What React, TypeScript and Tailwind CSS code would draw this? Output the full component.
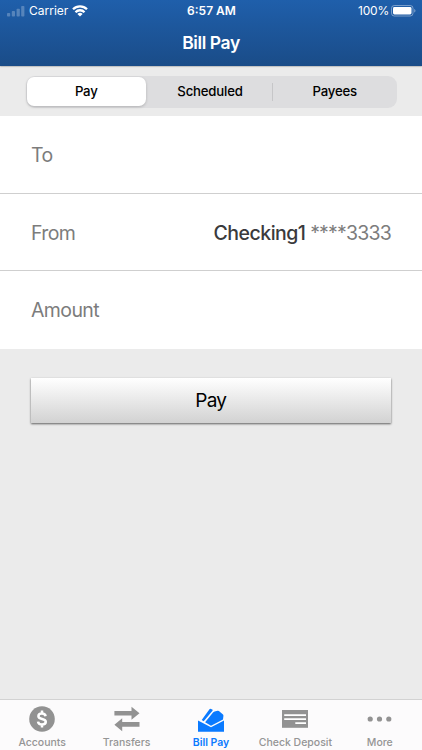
import { useState } from "react";
import type { ReactNode } from "react";

interface Segment {
  label: string;
  className: string;
}

const SEGMENTS: Segment[] = [
  { label: "Pay", className: "w-[119.5px]" },
  { label: "Scheduled", className: "w-[126px] pl-[2px]" },
  {
    label: "Payees",
    className:
      "relative flex-1 pl-[2px] before:absolute before:top-[6px] before:left-0 before:h-[18px] before:w-px before:bg-[#c6c6c8]",
  },
];

function SignalIcon() {
  return (
    <svg width="18" height="12" viewBox="0 0 18 12" fill="#fff" fillOpacity="0.25">
      <rect x="0" y="8" width="3.2" height="3.5" rx="0.8" />
      <rect x="4.8" y="6" width="3.2" height="5.5" rx="0.8" />
      <rect x="9.6" y="3.8" width="3.2" height="7.7" rx="0.8" />
      <rect x="14.2" y="1" width="3.2" height="10.5" rx="0.8" />
    </svg>
  );
}

function WifiIcon() {
  return (
    <svg width="16" height="12" viewBox="0 0 16 12" fill="none" stroke="#fff" strokeWidth="2.3">
      <path d="M1 4.3a10 10 0 0 1 14 0" />
      <path d="M3.5 7.2a6.2 6.2 0 0 1 9 0" />
      <path d="M8 11.6L5.4 9a3.6 3.6 0 0 1 5.2 0z" fill="#fff" stroke="none" />
    </svg>
  );
}

function BatteryIcon() {
  return (
    <svg width="25" height="12" viewBox="0 0 25 12">
      <rect x="0.5" y="0.5" width="21.5" height="10.5" rx="2.8" fill="none" stroke="#fff" strokeOpacity="0.4" />
      <rect x="2" y="2" width="18.5" height="7.5" rx="1.4" fill="#fff" />
      <path d="M23.2 4v3.6c.8-.3 1.3-1 1.3-1.8S24 4.3 23.2 4z" fill="#fff" fillOpacity="0.4" />
    </svg>
  );
}

function AccountsIcon() {
  return (
    <svg width="26" height="26" viewBox="0 0 26 26">
      <circle cx="13" cy="13" r="12.8" fill="#929292" />
      <path
        d="M16.6 10.2C16.3 8.4 14.9 7.6 13 7.6c-2.2 0-3.6 1-3.6 2.6 0 3.7 7.4 1.8 7.4 5.6 0 1.7-1.5 2.7-3.8 2.7-2.2 0-3.7-.9-4-2.9M13 4.6v3M13 18.5v3"
        fill="none"
        stroke="#fff"
        strokeWidth="2.5"
      />
    </svg>
  );
}

function TransfersIcon() {
  return (
    <svg width="26" height="26" viewBox="0 0 26 26" fill="#929292">
      <path d="M0.4 5H17.5V0.7L25.5 7.2L17.5 13.7V9.5H0.4z" />
      <path d="M25.5 16.1H8.2V12.3L0.4 18.8L8.2 25.3V20.7H25.5z" />
    </svg>
  );
}

function BillPayIcon() {
  return (
    <svg width="26" height="26" viewBox="0 0 26 26" fill="#0a7aff">
      <path d="M0 14.4L13 21.3L26 14.4V25.8H0z" />
      <path d="M3.7 14L11.3 3.4Q12 2.4 13 2.9L14.3 3.6Q15 4 14.5 4.7L5.7 15.3z" />
      <path d="M7.1 16.3L15 6.6Q15.6 5.8 16.6 5.5L19.6 4.7Q20.3 4.5 20.9 5L25 8.5Q25.6 9.1 25.4 10L25 13.4L13 19.8z" />
    </svg>
  );
}

function CheckDepositIcon() {
  return (
    <svg width="26" height="26" viewBox="0 0 26 26">
      <rect x="0" y="4" width="26" height="17.8" fill="#929292" />
      <path d="M2.2 9.2H24M2.2 13.2H24M13.3 17.2H24" stroke="#fff" strokeWidth="1.7" />
    </svg>
  );
}

function MoreIcon() {
  return (
    <svg width="26" height="26" viewBox="0 0 26 26" fill="#929292">
      <circle cx="3.2" cy="13" r="2.6" />
      <circle cx="12.5" cy="13" r="2.6" />
      <circle cx="21.8" cy="13" r="2.6" />
    </svg>
  );
}

interface Tab {
  label: string;
  icon: ReactNode;
}

const TABS: Tab[] = [
  { label: "Accounts", icon: <AccountsIcon /> },
  { label: "Transfers", icon: <TransfersIcon /> },
  { label: "Bill Pay", icon: <BillPayIcon /> },
  { label: "Check Deposit", icon: <CheckDepositIcon /> },
  { label: "More", icon: <MoreIcon /> },
];

function Row({ label, children }: { label: string; children?: ReactNode }) {
  return (
    <div className="flex h-[77px] items-start justify-between px-[31px] pt-[24px] text-[19.5px] leading-[30px] text-[#7c7c7c] first:h-[78px]">
      <span className="tracking-[-0.6px]">{label}</span>
      {children}
    </div>
  );
}

export default function App() {
  const [segment, setSegment] = useState("Pay");

  return (
    <div className="flex h-[750px] w-[422px] flex-col overflow-hidden bg-[#ebebeb] font-['Inter',sans-serif]">
      {/* Header */}
      <header className="relative h-[66px] shrink-0 bg-gradient-to-b from-[#1f5fab] to-[#1a4c88] text-white shadow-[0_0.5px_1.5px_rgba(0,0,0,0.45)]">
        <div className="grid h-[22px] grid-cols-3 items-center pr-[6px] pl-[7px] text-[12px]">
          <div className="flex items-center gap-[4px]">
            <SignalIcon />
            <span>Carrier</span>
            <WifiIcon />
          </div>
          <span className="text-center font-semibold">6:57 AM</span>
          <div className="flex items-center justify-end gap-[2px]">
            <span className="tracking-[-0.2px]">100%</span>
            <BatteryIcon />
          </div>
        </div>
        <h1 className="pt-[8px] text-center text-[17.5px] leading-[26px] font-semibold tracking-[-0.4px]">Bill Pay</h1>
      </header>

      {/* Segmented control */}
      <div className="h-[50px] shrink-0 px-[25.5px] pt-[9.5px]">
        <div className="flex h-[32px] items-center rounded-[9px] bg-[#dddddf] p-[1px]">
          {SEGMENTS.map((s) => (
            <button
              key={s.label}
              onClick={() => setSegment(s.label)}
              className={`h-[29px] pt-px text-[13.2px] font-medium tracking-[-0.2px] text-black ${s.className} ${
                segment === s.label ? "rounded-[7px] bg-white shadow-[0_1px_3px_rgba(0,0,0,0.2)]" : ""
              }`}
            >
              {s.label}
            </button>
          ))}
        </div>
      </div>

      {/* Payment form */}
      <div className="h-[232.5px] shrink-0 divide-y divide-[#cfcfcf] bg-white">
        <Row label="To" />
        <Row label="From">
          <span className="tracking-[-0.8px]">
            <span className="font-medium tracking-[-0.5px] text-[#3a3a3c]">Checking1</span> ****3333
          </span>
        </Row>
        <Row label="Amount" />
      </div>

      <div className="flex-1 pt-[29px] pr-[31px] pl-[30.5px]">
        <button className="h-[45px] w-full bg-gradient-to-b from-white to-[#d2d2d2] pt-[3px] text-[19px] tracking-[-0.8px] text-black shadow-[0_1px_2px_rgba(0,0,0,0.6)]">
          Pay
        </button>
      </div>

      {/* Tab bar */}
      <nav className="grid h-[51px] shrink-0 grid-cols-5 border-t border-[#d2d2d2] bg-[#fcfbfc]">
        {TABS.map((t) => (
          <button
            key={t.label}
            className={`flex flex-col items-center pt-[6px] text-[10.5px] leading-[14px] whitespace-nowrap ${
              t.label === "Bill Pay" ? "font-semibold text-[#0a7aff]" : "font-medium text-[#959595]"
            }`}
          >
            {t.icon}
            <span className="mt-[4px]">{t.label}</span>
          </button>
        ))}
      </nav>
    </div>
  );
}
